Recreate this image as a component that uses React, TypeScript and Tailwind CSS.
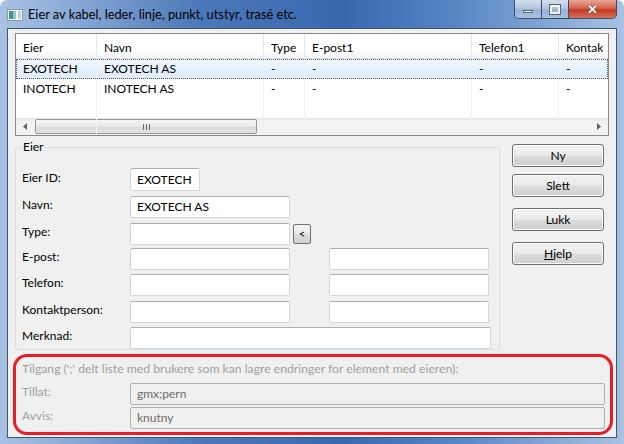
import React from "react";

const inputCls =
  "h-[22px] bg-white border border-[#d3d6db] border-t-[#abadb3] rounded-[2px] px-[6px] flex items-center text-black";

const FieldBox = ({ w, value, h = "h-[22px]" }: { w: string; value?: string; h?: string }) => (
  <div className={`${inputCls} ${w} ${h}`}>{value}</div>
);

const FormRow = ({
  label,
  mt,
  children,
}: {
  label: string;
  mt: string;
  children: React.ReactNode;
}) => (
  <div className={`flex items-center ${mt}`}>
    <div className="w-[108px] pb-[4px]">{label}</div>
    {children}
  </div>
);

const WinButton = ({ label, mt, underline }: { label: string; mt: string; underline?: boolean }) => (
  <div
    className={`h-[23px] w-[92px] ${mt} rounded-[3px] border border-[#707070] bg-[linear-gradient(#f2f2f2_0%,#ebebeb_48%,#dddddd_52%,#cfcfcf_100%)] flex items-center justify-center text-black shadow-[inset_0_0_0_1px_#fcfcfc]`}
  >
    {underline ? (
      <span>
        <span className="underline">{label[0]}</span>
        {label.slice(1)}
      </span>
    ) : (
      label
    )}
  </div>
);

const columns = [
  { title: "Eier", w: "w-[81px]" },
  { title: "Navn", w: "w-[167px]" },
  { title: "Type", w: "w-[41px]" },
  { title: "E-post1", w: "w-[167px]" },
  { title: "Telefon1", w: "w-[87px]" },
  { title: "Kontak", w: "w-[80px]" },
];

const rows = [
  ["EXOTECH", "EXOTECH AS", "-", "-", "-", "-"],
  ["INOTECH", "INOTECH AS", "-", "-", "-", "-"],
];

export default function App() {
  return (
    <div className="w-[624px] h-[444px] overflow-hidden font-['Segoe_UI','Lato',sans-serif] text-[12px] leading-[16px] text-black">
      <div className="w-[624px] h-[444px] rounded-t-[7px] bg-[linear-gradient(90deg,#a9c2e2_0%,#88a9d6_12%,#4b78b8_32%,#3a68af_55%,#5483c3_72%,#8aabd8_90%,#a9c2e2_100%)] flex flex-col">
        {/* Title bar */}
        <div className="h-[28px] flex items-start pl-[7px] pr-[7px] shrink-0">
          <svg width="16" height="12" viewBox="0 0 16 12" className="mt-[9px]">
            <rect x="0.5" y="0.5" width="15" height="11" fill="#f4f6f8" stroke="#8a98a8" />
            <rect x="2" y="2" width="4" height="8" fill="#3c9a7c" />
            <rect x="6" y="2" width="3" height="8" fill="#8fc1e0" />
            <rect x="11" y="2" width="3" height="8" fill="#c9cfd6" />
          </svg>
          <div className="ml-[5px] mt-[6px] text-[12.8px] text-black">
            Eier av kabel, leder, linje, punkt, utstyr, trasé etc.
          </div>
          <div className="ml-auto flex h-[19px] rounded-b-[5px] border border-t-0 border-[#3a4f6e] overflow-hidden">
            <div className="w-[27px] h-full bg-[linear-gradient(#d3deec_0%,#b4c6de_45%,#98b2d3_55%,#a9c1de_100%)] border-r border-[#3a4f6e] flex items-center justify-center">
              <div className="w-[10px] h-[3px] mt-[5px] bg-[#eef2f7] border border-[#55657c]" />
            </div>
            <div className="w-[27px] h-full bg-[linear-gradient(#d3deec_0%,#b4c6de_45%,#98b2d3_55%,#a9c1de_100%)] border-r border-[#3a4f6e] flex items-center justify-center">
              <div className="w-[10px] h-[9px] border-[2px] border-[#f3f5f8] outline outline-1 outline-[#55657c] bg-transparent" />
            </div>
            <div className="w-[47px] h-full bg-[linear-gradient(#e8a795_0%,#d5664e_45%,#c23a22_55%,#d4735a_100%)] flex items-center justify-center">
              <span className="text-white font-bold text-[13px] leading-[13px] [text-shadow:0_0_1px_#3b2a2a,0_0_1px_#3b2a2a]">
                ✕
              </span>
            </div>
          </div>
        </div>

        {/* Client area */}
        <div className="px-[7px] pb-[6px] flex-1 flex">
          <div className="w-[610px] h-[410px] border border-[#3c5678] bg-[#f0f0f0] flex flex-col">
            {/* List view */}
            <div className="ml-[7px] mt-[4px] w-[594px] h-[103px] border border-[#828790] bg-white flex flex-col overflow-hidden">
              <div className="flex h-[25px] bg-[linear-gradient(#ffffff_0%,#ffffff_60%,#f3f4f6_100%)] border-b border-[#e5e5e5] shrink-0">
                {columns.map((c) => (
                  <div
                    key={c.title}
                    className={`${c.w} shrink-0 pl-[7px] pt-[6px] border-r border-[#e3e8ee] whitespace-nowrap overflow-hidden`}
                  >
                    {c.title}
                  </div>
                ))}
              </div>
              <div className="flex-1 relative">
                {rows.map((r, i) => (
                  <div
                    key={i}
                    className={`flex h-[20px] ${
                      i === 0
                        ? "bg-[linear-gradient(#f1f7fe_0%,#dcebfc_100%)] outline outline-1 outline-dotted outline-[#4f5a6a] -outline-offset-1"
                        : ""
                    }`}
                  >
                    {r.map((cell, j) => (
                      <div
                        key={j}
                        className={`${columns[j].w} shrink-0 pl-[7px] flex items-center border-r border-[#eef3f9] whitespace-nowrap overflow-hidden`}
                      >
                        {cell}
                      </div>
                    ))}
                  </div>
                ))}
                <div className="flex h-full">
                  {columns.map((c) => (
                    <div key={c.title} className={`${c.w} shrink-0 border-r border-[#eef3f9]`} />
                  ))}
                </div>
              </div>
              {/* Horizontal scrollbar */}
              <div className="h-[17px] shrink-0 bg-[linear-gradient(#e3e3e3_0%,#f2f2f2_20%,#f2f2f2_100%)] flex items-center">
                <div className="w-[18px] flex justify-center">
                  <svg width="4" height="7" viewBox="0 0 4 7">
                    <path d="M4 0 L0 3.5 L4 7 Z" fill="#606060" />
                  </svg>
                </div>
                <div className="w-[222px] h-[15px] ml-[1px] rounded-[2px] border border-[#979797] bg-[linear-gradient(#f6f6f6_0%,#e9e9e9_50%,#d9d9d9_51%,#e3e3e3_100%)] flex items-center justify-center">
                  <svg width="7" height="6" viewBox="0 0 7 6">
                    <path d="M0.5 0 V6 M3.5 0 V6 M6.5 0 V6" stroke="#6a6a6a" strokeWidth="1" />
                  </svg>
                </div>
                <div className="ml-auto w-[18px] flex justify-center">
                  <svg width="4" height="7" viewBox="0 0 4 7">
                    <path d="M0 0 L4 3.5 L0 7 Z" fill="#606060" />
                  </svg>
                </div>
              </div>
            </div>

            {/* Group box + buttons */}
            <div className="flex mt-[8px]">
              <div className="ml-[7px] mt-[3px] w-[485px] h-[203px] border border-[#d5dfe5] rounded-[3px] relative pl-[6px]">
                <span className="absolute -top-[9px] left-[5px] px-[2px] bg-[#f0f0f0] leading-[16px]">Eier</span>
                <FormRow label="Eier ID:" mt="mt-[20px]">
                  <FieldBox w="w-[70px]" h="h-[23px]" value="EXOTECH" />
                </FormRow>
                <FormRow label="Navn:" mt="mt-[5px]">
                  <FieldBox w="w-[160px]" value="EXOTECH AS" />
                </FormRow>
                <FormRow label="Type:" mt="mt-[5px]">
                  <FieldBox w="w-[160px]" />
                  <div className="ml-[3px] w-[18px] h-[20px] rounded-[2px] border border-[#707070] bg-[linear-gradient(#f2f2f2_0%,#ebebeb_48%,#dddddd_52%,#cfcfcf_100%)] flex items-center justify-center text-[11px]">
                    &lt;
                  </div>
                </FormRow>
                <FormRow label="E-post:" mt="mt-[3px]">
                  <FieldBox w="w-[160px]" />
                  <FieldBox w="w-[160px] ml-[39px]" />
                </FormRow>
                <FormRow label="Telefon:" mt="mt-[4px]">
                  <FieldBox w="w-[160px]" />
                  <FieldBox w="w-[160px] ml-[39px]" />
                </FormRow>
                <FormRow label="Kontaktperson:" mt="mt-[5px]">
                  <FieldBox w="w-[160px]" />
                  <FieldBox w="w-[160px] ml-[39px]" />
                </FormRow>
                <FormRow label="Merknad:" mt="mt-[4px]">
                  <FieldBox w="w-[361px]" />
                </FormRow>
              </div>

              <div className="ml-[12px] flex flex-col">
                <WinButton label="Ny" mt="mt-0" />
                <WinButton label="Slett" mt="mt-[7px]" />
                <WinButton label="Lukk" mt="mt-[11px]" />
                <WinButton label="Hjelp" mt="mt-[11px]" underline />
              </div>
            </div>

            {/* Access section, marked in red */}
            <div className="ml-[5px] mt-[4px] w-[600px] h-[81px] border-[3px] border-[#e81d25] rounded-[14px] pl-[6px] pr-[5px] text-[#a0a0a0]">
              <div className="pt-[4px] text-[12.2px]">
                Tilgang (';' delt liste med brukere som kan lagre endringer for element med eieren):
              </div>
              <div className="flex items-center mt-[6px]">
                <div className="w-[108px] pb-[4px]">Tillat:</div>
                <div className="flex-1 h-[22px] border border-[#adb2b5] rounded-[2px] bg-[#f0f0f0] px-[6px] flex items-center text-[#6d6d6d]">
                  gmx;pern
                </div>
              </div>
              <div className="flex items-center mt-[2px]">
                <div className="w-[108px] pb-[4px]">Avvis:</div>
                <div className="flex-1 h-[22px] border border-[#adb2b5] rounded-[2px] bg-[#f0f0f0] px-[6px] flex items-center text-[#6d6d6d]">
                  knutny
                </div>
              </div>
            </div>
          </div>
        </div>
      </div>
    </div>
  );
}
